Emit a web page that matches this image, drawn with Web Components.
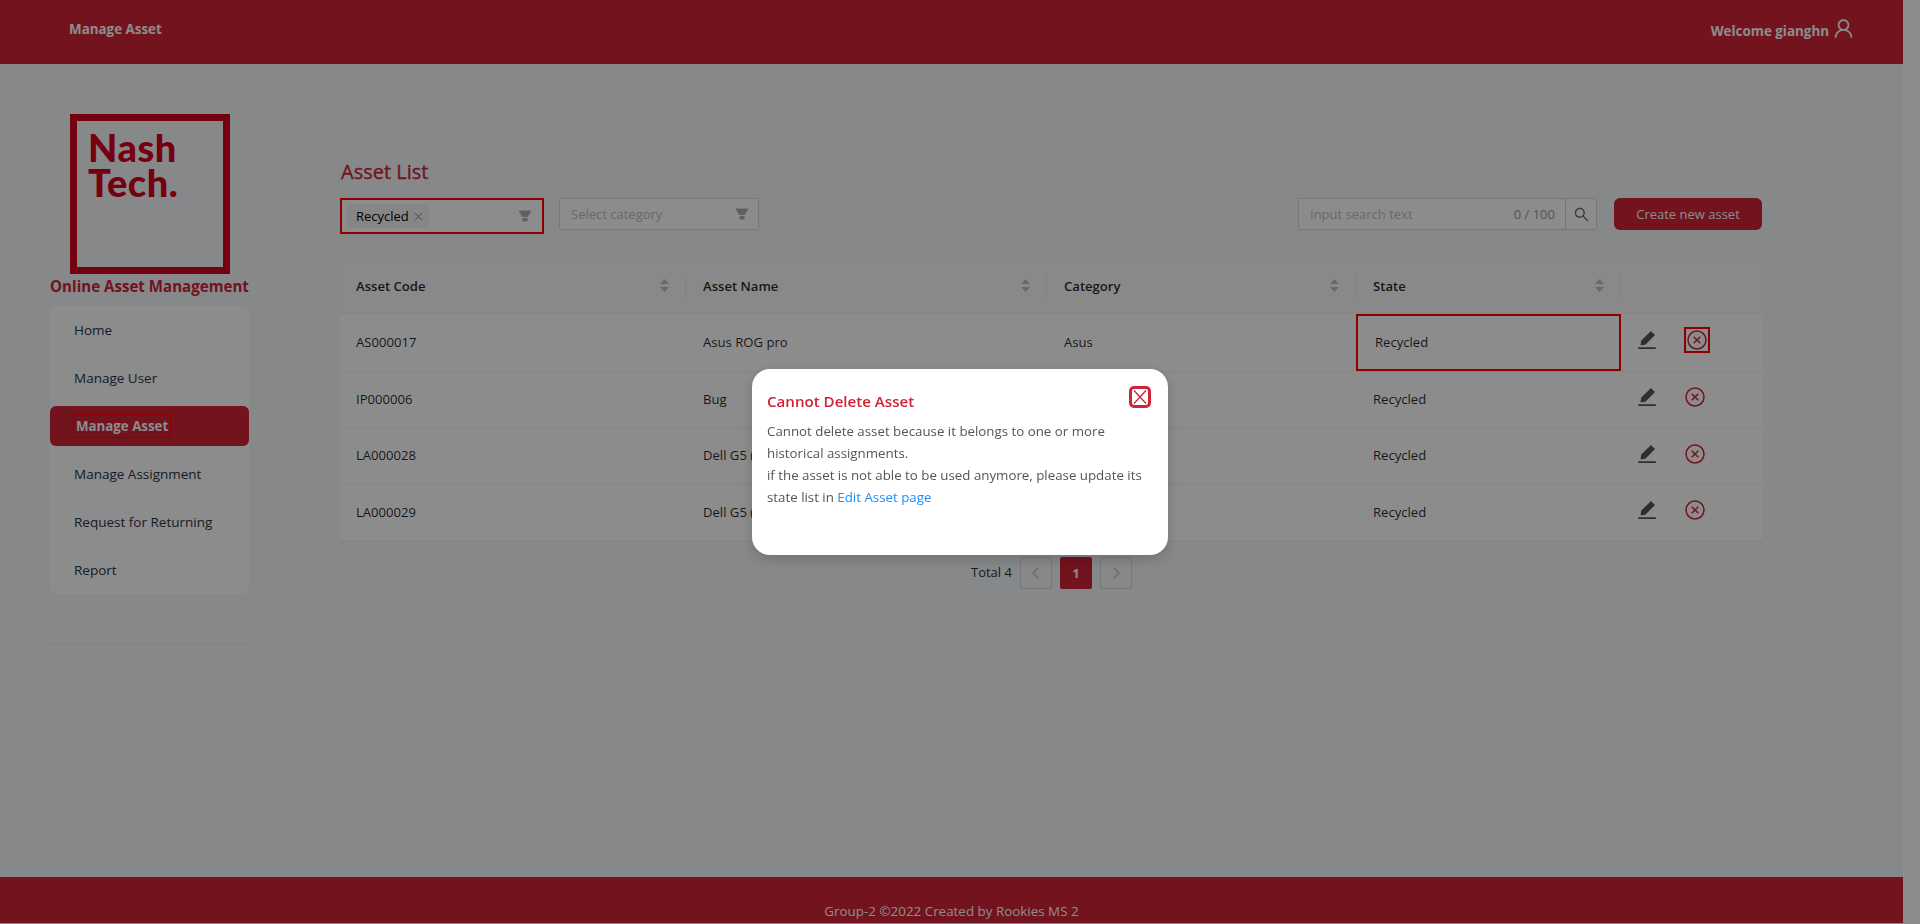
<!DOCTYPE html>
<html lang="en">
<head>
<meta charset="utf-8">
<title>Manage Asset</title>
<style>
  html, body { margin: 0; height: 100%; }
  body { background: #fff; font-family: "Open Sans", "Noto Sans", sans-serif; font-size: 13px; overflow: hidden; }
  #page { width: 1903px; height: 924px; display: flex; flex-direction: column; background: #f5f7fb; }
  #content { flex: 1; display: flex; }
</style>
</head>
<body>
<div id="page">
  <app-header title-text="Manage Asset" user="giang&#104;n"></app-header>
  <div id="content">
    <app-sidebar active="Manage Asset"></app-sidebar>
    <asset-page></asset-page>
  </div>
  <app-footer>Group-2 ©2022 Created by Rookies MS 2</app-footer>
</div>
<page-mask></page-mask>
<alert-modal heading="Cannot Delete Asset">
  Cannot delete asset because it belongs to one or more<br>
  historical assignments.<br>
  if the asset is not able to be used anymore, please update its<br>
  state list in <a href="#" style="color:#1890ff;text-decoration:none">Edit Asset page</a>
</alert-modal>

<script>
const ICONS = {
  user: 'M858.5 763.6a374 374 0 0 0-80.6-119.5 375.63 375.63 0 0 0-119.5-80.6c-.4-.2-.8-.3-1.2-.5C719.5 518 760 444.7 760 362c0-137-111-248-248-248S264 225 264 362c0 82.7 40.5 156 102.8 201.1-.4.2-.8.3-1.2.5-44.8 18.9-85 46-119.5 80.6a375.63 375.63 0 0 0-80.6 119.5A371.7 371.7 0 0 0 136 901.8a8 8 0 0 0 8 8.2h60c4.4 0 7.9-3.5 8-7.8 2-77.2 33-149.5 87.8-204.3 56.7-56.7 132-87.9 212.2-87.9s155.5 31.2 212.2 87.9C779 752.7 810 825 812 902.2c.1 4.4 3.6 7.8 8 7.8h60a8 8 0 0 0 8-8.2c-1-47.8-10.9-94.3-29.5-138.2zM512 534c-45.9 0-89.1-17.9-121.6-50.4S340 407.9 340 362c0-45.9 17.9-89.1 50.4-121.6S466.1 190 512 190s89.1 17.9 121.6 50.4S684 316.1 684 362c0 45.9-17.9 89.1-50.4 121.6S557.9 534 512 534z',
  search: 'M909.6 854.5L649.9 594.8C690.2 542.7 712 479 712 412c0-80.2-31.3-155.4-87.9-212.1-56.6-56.7-132-87.9-212.1-87.9s-155.5 31.3-212.1 87.9C143.2 256.5 112 331.8 112 412c0 80.1 31.3 155.5 87.9 212.1C256.5 680.8 331.8 712 412 712c67 0 130.6-21.8 182.7-62l259.7 259.6a8.2 8.2 0 0 0 11.6 0l43.6-43.5a8.2 8.2 0 0 0 0-11.6zM570.4 570.4C528 612.7 471.8 636 412 636s-116-23.3-158.4-65.6C211.3 528 188 471.8 188 412s23.3-116.1 65.6-158.4C296 211.3 352.2 188 412 188s116.1 23.2 158.4 65.6S636 352.2 636 412s-23.3 116.1-65.6 158.4z',
  filter: 'M349 838c0 17.7 14.2 32 31.8 32h262.4c17.6 0 31.8-14.3 31.8-32V642H349v196zm531.1-684H143.9c-24.5 0-39.8 26.7-27.5 48l221.3 376h348.8l221.3-376c12.1-21.3-3.2-48-27.7-48z',
  edit: 'M880 836H144c-17.7 0-32 14.3-32 32v36c0 4.4 3.6 8 8 8h784c4.4 0 8-3.6 8-8v-36c0-17.7-14.3-32-32-32zm-622.3-84c2 0 4-.2 6-.5L431.9 722c2-.4 3.9-1.3 5.3-2.8l423.9-423.9a9.96 9.96 0 0 0 0-14.1L694.9 114.9c-1.9-1.9-4.4-2.9-7.1-2.9s-5.2 1-7.1 2.9L256.8 538.8c-1.5 1.5-2.4 3.3-2.8 5.3l-29.5 168.2a33.5 33.5 0 0 0 9.4 29.8c6.6 6.4 14.9 9.9 23.8 9.9z'
};
const icon = (name, size, color) =>
  `<svg width="${size}" height="${size}" viewBox="64 64 896 896" fill="${color}" style="display:block"><path d="${ICONS[name]}"/></svg>`;

customElements.define('app-header', class extends HTMLElement {
  connectedCallback() {
    this.attachShadow({mode: 'open'});
    this.shadowRoot.innerHTML = `
      <style>
        :host { display: flex; align-items: center; justify-content: space-between; height: 64px; flex: none;
                background: #cf2338; color: #fff; font-weight: 700; font-size: 13.4px; padding: 0 49px 0 69px; }
        .title { margin-bottom: 6px; }
        .user { display: flex; align-items: center; gap: 4px; margin-bottom: 2px; }
        svg { margin-bottom: 6px; }
      </style>
      <div class="title">${this.getAttribute('title-text')}</div>
      <div class="user"><span>Welcome ${this.getAttribute('user')}</span>${icon('user', 21, '#fff')}</div>`;
  }
});

customElements.define('app-sidebar', class extends HTMLElement {
  connectedCallback() {
    this.attachShadow({mode: 'open'});
    const active = this.getAttribute('active');
    const items = ['Home', 'Manage User', 'Manage Asset', 'Manage Assignment', 'Request for Returning', 'Report'];
    this.shadowRoot.innerHTML = `
      <style>
        :host { display: flex; flex-direction: column; width: 199px; flex: none; margin-left: 50px; padding-top: 50px; color: #2b3344; }
        .logo { width: 160px; height: 160px; box-sizing: border-box; border: 7px solid #d6001c; margin-left: 20px; color: #d6001c;
                font: 900 38px/35px Lato, sans-serif; letter-spacing: .5px; padding: 9px 0 0 11px; }
        .name { text-align: center; font-weight: 700; font-size: 15.1px; color: #cf2338; line-height: 25px; white-space: nowrap; margin-bottom: 7px; }
        ul { list-style: none; margin: 0; padding: 0; background: #fff; border-radius: 6px; }
        li { height: 48px; display: flex; align-items: center; padding-left: 24px; font-weight: 500; font-size: 13.5px; }
        li.on { height: 40px; margin: 4px 0; border-radius: 6px; background: #cf2338; color: #fff; font-weight: 700; font-size: 13.3px; }
        li.on span { outline: 1px solid red; padding: 2px 2px; }
        hr { border: 0; border-top: 1px solid #e9e9ea; margin: 50px 0 0; }
      </style>
      <div class="logo">Nash<br>Tech.</div>
      <div class="name">Online Asset Management</div>
      <ul>${items.map(t => `<li class="${t === active ? 'on' : ''}"><span>${t}</span></li>`).join('')}</ul>
      <hr>`;
  }
});

customElements.define('filter-select', class extends HTMLElement {
  connectedCallback() {
    this.attachShadow({mode: 'open'});
    const chip = this.getAttribute('chip');
    this.shadowRoot.innerHTML = `
      <style>
        :host { display: flex; align-items: center; justify-content: space-between; box-sizing: border-box; background: #fff; }
        :host([chip]) { width: 204px; height: 36px; border: 2px solid red; padding: 0 10px 0 5px; }
        :host([placeholder]) { width: 200px; height: 32px; border: 1px solid #d9d9d9; border-radius: 2px; padding: 0 9px 0 11px; color: #bfbfbf; }
        .chip { display: flex; align-items: center; gap: 5px; height: 24px; width: 82px; box-sizing: border-box; padding: 0 8px 0 9px;
                background: #f5f5f5; border-radius: 2px; color: #000; white-space: nowrap; }
        .chip svg { flex: none; }
      </style>
      ${chip
        ? `<span class="chip">${chip}<svg width="9" height="9" viewBox="0 0 10 10" stroke="#777" fill="none"><path d="M1 1l8 8M9 1l-8 8"/></svg></span>`
        : `<span>${this.getAttribute('placeholder')}</span>`}
      ${icon('filter', 14, '#b0b0b0')}`;
  }
});

customElements.define('search-box', class extends HTMLElement {
  connectedCallback() {
    this.attachShadow({mode: 'open'});
    this.shadowRoot.innerHTML = `
      <style>
        :host { display: flex; width: 299px; height: 32px; box-sizing: border-box; border: 1px solid #d9d9d9; border-radius: 2px; background: #fff; }
        .in { flex: 1; display: flex; justify-content: space-between; align-items: center; padding: 0 10px 0 11px; color: #bfbfbf; }
        .count { color: #9a9a9a; }
        .btn { width: 30px; border-left: 1px solid #d9d9d9; display: flex; align-items: center; justify-content: center; }
      </style>
      <div class="in"><span>Input search text</span><span class="count">0 / 100</span></div>
      <div class="btn">${icon('search', 15, '#666')}</div>`;
  }
});

customElements.define('sort-carets', class extends HTMLElement {
  connectedCallback() {
    this.attachShadow({mode: 'open'});
    this.shadowRoot.innerHTML = `
      <style>:host { display: block; width: 9px; height: 13px; }</style>
      <svg width="9" height="13" viewBox="0 0 9 13" fill="#bfbfbf" style="display:block"><path d="M4.5 0L9 5H0zM0 8h9L4.5 13z"/></svg>`;
  }
});

customElements.define('asset-table', class extends HTMLElement {
  connectedCallback() {
    this.attachShadow({mode: 'open'});
    const heads = ['Asset Code', 'Asset Name', 'Category', 'State'];
    const rows = [
      ['AS000017', 'Asus ROG pro', 'Asus', 'Recycled', 58],
      ['IP000006', 'Bug', '', 'Recycled', 56],
      ['LA000028', 'Dell G5 (', '', 'Recycled', 57],
      ['LA000029', 'Dell G5 (', '', 'Recycled', 56]
    ];
    const del = `<svg width="20" height="20" viewBox="0 0 20 20" fill="none" stroke="#cf2338" stroke-width="1.5" style="display:block"><circle cx="10" cy="10" r="9"/><path d="M6.7 6.7l6.6 6.6M13.3 6.7l-6.6 6.6"/></svg>`;
    this.shadowRoot.innerHTML = `
      <style>
        :host { display: block; width: 1423px; background: #fff; color: rgba(0,0,0,.85); font-size: 13.1px; }
        .row { display: grid; grid-template-columns: 346px 361px 309px 265px 142px; border-bottom: 1px solid #f0f0f0; box-sizing: border-box; }
        .head { height: 55px; background: #fafafa; font-weight: 600; }
        .head > div { display: flex; align-items: center; justify-content: space-between; padding: 0 17px 1px 16px; position: relative; }
        .head > div:not(:first-child) { padding-left: 17px; }
        .head > div:not(:last-child)::after { content: ''; position: absolute; right: 0; top: 16px; height: 22px; width: 1px; background: #ececec; }
        .cell { display: flex; align-items: center; padding: 0 0 2px 17px; box-sizing: border-box; white-space: nowrap; overflow: hidden; }
        .cell:first-child { padding-left: 16px; }
        .mark { outline: 2px solid red; outline-offset: -2px; padding-left: 19px; }
        .acts { display: flex; align-items: center; padding-left: 16px; gap: 28px; margin-top: -5px; }
        .box { outline: 2px solid red; outline-offset: 1px; margin-left: 2px; }
      </style>
      <div class="row head">${heads.map(h => `<div><span>${h}</span><sort-carets></sort-carets></div>`).join('')}<div></div></div>
      ${rows.map((r, i) => `
        <div class="row" style="height:${r[4]}px">
          <div class="cell">${r[0]}</div><div class="cell">${r[1]}</div><div class="cell">${r[2]}</div>
          <div class="cell ${i === 0 ? 'mark' : ''}">${r[3]}</div>
          <div class="acts">${icon('edit', 20, '#555')}<span class="${i === 0 ? 'box' : ''}">${del}</span></div>
        </div>`).join('')}`;
  }
});

customElements.define('page-nav', class extends HTMLElement {
  connectedCallback() {
    this.attachShadow({mode: 'open'});
    const chev = d => `<svg width="10" height="12" viewBox="0 0 10 12" fill="none" stroke="#bbb" stroke-width="1.2"><path d="${d}"/></svg>`;
    this.shadowRoot.innerHTML = `
      <style>
        :host { display: flex; align-items: center; justify-content: flex-start; gap: 8px; color: rgba(0,0,0,.85); }
        span { margin-bottom: 2px; }
        b { width: 32px; height: 32px; box-sizing: border-box; border: 1px solid #d9d9d9; border-radius: 2px; display: flex; align-items: center; justify-content: center; font-weight: 600; }
        b.on { border: 0; background: #cf2338; color: #fff; font-weight: 700; }
      </style>
      <span>Total ${this.getAttribute('total')}</span>
      <b>${chev('M7 1L2 6l5 5')}</b><b class="on">1</b><b>${chev('M3 1l5 5-5 5')}</b>`;
  }
});

customElements.define('asset-page', class extends HTMLElement {
  connectedCallback() {
    this.attachShadow({mode: 'open'});
    this.shadowRoot.innerHTML = `
      <style>
        :host { display: block; margin-left: 91px; padding-top: 93px; }
        h2 { margin: 0 0 11px 1px; font-size: 20px; line-height: 30px; font-weight: 400; color: #cf2338; -webkit-text-stroke: .3px #cf2338; }
        .bar { display: flex; align-items: flex-start; height: 61px; }
        filter-select + filter-select { margin-left: 15px; }
        search-box { margin-left: auto; }
        .create { margin-left: 17px; width: 148px; height: 32px; box-sizing: border-box; border-radius: 6px; background: #cf2338; color: #fff;
                  display: flex; align-items: center; justify-content: center; margin-right: 1px; }
        page-nav { margin: 16px 0 0 631px; }
      </style>
      <h2>Asset List</h2>
      <div class="bar">
        <filter-select chip="Recycled"></filter-select>
        <filter-select placeholder="Select category"></filter-select>
        <search-box></search-box>
        <div class="create">Create new asset</div>
      </div>
      <asset-table></asset-table>
      <page-nav total="4"></page-nav>`;
  }
});

customElements.define('app-footer', class extends HTMLElement {
  connectedCallback() {
    this.attachShadow({mode: 'open'});
    this.shadowRoot.innerHTML = `
      <style>
        :host { display: flex; justify-content: center; align-items: flex-end; height: 46px; margin-bottom: 1px; flex: none; background: #cf2338; color: #fff; line-height: 24px; font-size: 13.4px; }
      </style>
      <slot></slot>`;
  }
});

customElements.define('page-mask', class extends HTMLElement {
  connectedCallback() {
    this.attachShadow({mode: 'open'});
    this.shadowRoot.innerHTML = `<style>:host { position: fixed; inset: 0; background: rgba(0,0,0,.45); }</style>`;
  }
});

customElements.define('alert-modal', class extends HTMLElement {
  connectedCallback() {
    this.attachShadow({mode: 'open'});
    this.shadowRoot.innerHTML = `
      <style>
        :host { position: fixed; left: 752px; top: 369px; width: 416px; height: 186px; box-sizing: border-box; padding: 19px 15px;
                background: #fff; border-radius: 18px; box-shadow: 0 4px 14px rgba(0,0,0,.18); color: #555; line-height: 22px; font-size: 13.3px; white-space: nowrap; }
        h3 { margin: 0 0 6px; font-size: 15.1px; line-height: 26px; font-weight: 600; color: #cf2338; }
        .close { position: absolute; left: 377px; top: 17px; width: 22px; height: 22px; box-sizing: border-box; border: 3px solid #cf2338; border-radius: 5px; }
        .close svg { display: block; }
      </style>
      <h3>${this.getAttribute('heading')}</h3>
      <div class="close"><svg width="16" height="16" viewBox="0 0 16 16" fill="none" stroke="#cf2338" stroke-width="1.3"><path d="M2 1.5l12 13M14 1.5l-12 13"/></svg></div>
      <div><slot></slot></div>`;
  }
});
</script>
</body>
</html>
